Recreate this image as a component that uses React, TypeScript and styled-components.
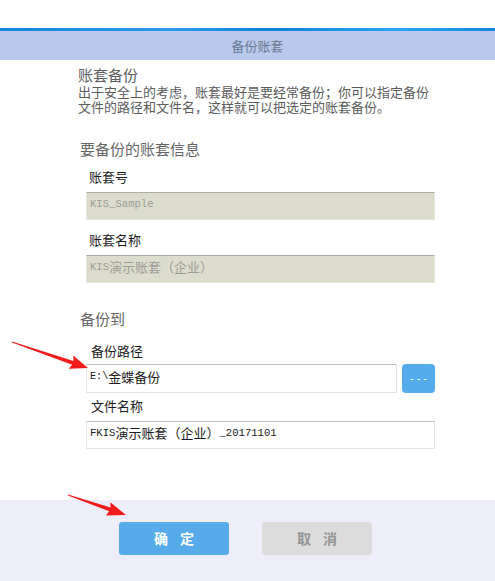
import React from 'react';
import styled, { createGlobalStyle } from 'styled-components';

const GlobalStyle = createGlobalStyle`
  html, body {
    margin: 0;
    padding: 0;
    background: #ffffff;
  }
  body {
    font-family: "Noto Sans CJK SC", "Noto Sans", sans-serif;
  }
`;

const Page = styled.div`
  position: relative;
  width: 495px;
  height: 581px;
  display: flex;
  flex-direction: column;
  background: #ffffff;
  overflow: hidden;
`;

const TopGap = styled.div`
  height: 28px;
  flex-shrink: 0;
`;

const TitleBar = styled.div`
  height: 32px;
  flex-shrink: 0;
  border-top: 3px solid transparent;
  border-image: linear-gradient(90deg, #1585da, #2a9ae8 35%, #1080d8 55%, #2ea2ee 80%, #1586dc) 1;
  background: #b9c9ec;
  display: flex;
  align-items: center;
  justify-content: center;
  padding-left: 20px;
  padding-bottom: 1px;
  box-sizing: border-box;
  font-size: 13px;
  color: #6b7a93;
`;

const Content = styled.div`
  flex: 1;
  padding: 6px 0 0 78px;
`;

const IntroTitle = styled.div`
  font-size: 15px;
  line-height: 18px;
  color: #606060;
`;

const IntroText = styled.div`
  width: 356px;
  font-size: 13px;
  line-height: 15px;
  color: #5c5c5c;
`;

const SectionTitle = styled.div<{ $gap: number }>`
  margin-top: ${(p) => p.$gap}px;
  padding-left: 2px;
  font-size: 15px;
  line-height: 18px;
  color: #666666;
`;

const Label = styled.div<{ $gap: number; $indent: number }>`
  margin-top: ${(p) => p.$gap}px;
  padding-left: ${(p) => p.$indent}px;
  font-size: 13px;
  line-height: 16px;
  color: #1c1c1c;
`;

const Field = styled.div<{ $disabled?: boolean; $width?: number; $height?: number }>`
  margin-top: ${(p) => (p.$disabled ? 7 : 0)}px;
  margin-left: 8px;
  width: ${(p) => p.$width ?? 349}px;
  height: ${(p) => p.$height ?? 28}px;
  box-sizing: border-box;
  display: flex;
  align-items: center;
  padding: 0 3px 5px;
  font-size: 13px;
  white-space: nowrap;
  background: ${(p) => (p.$disabled ? '#dcdccc' : '#ffffff')};
  color: ${(p) => (p.$disabled ? '#9c9c96' : '#1a1a1a')};
  border: 1px solid ${(p) => (p.$disabled ? '#e6e6de' : '#e2e4ea')};
  border-top-color: ${(p) => (p.$disabled ? '#acaca4' : '#b9bcc4')};
`;

const Mono = styled.span<{ $size?: number }>`
  font-family: "Liberation Mono", "DejaVu Sans Mono", monospace;
  font-size: ${(p) => p.$size ?? 10.6}px;
`;

const PathRow = styled.div`
  margin-top: 5px;
  display: flex;
  gap: 5px;
`;

const BrowseButton = styled.button`
  width: 33px;
  height: 29px;
  padding: 0 0 2px 3px;
  border: none;
  border-radius: 4px;
  background: #56abec;
  color: #ffffff;
  font-family: "Liberation Sans", sans-serif;
  font-size: 11px;
  letter-spacing: 3px;
  cursor: pointer;
`;

const FileField = styled(Field)`
  margin-top: 7px;
  border-top-color: #b8c2c0;
`;

const Footer = styled.div`
  height: 81px;
  flex-shrink: 0;
  background: #eeeefb;
  display: flex;
  align-items: flex-start;
  gap: 33px;
  padding: 22px 0 0 119px;
  box-sizing: border-box;
`;

const DialogButton = styled.button<{ $primary?: boolean }>`
  width: 110px;
  height: 33px;
  border: none;
  border-radius: 3px;
  background: ${(p) => (p.$primary ? '#58abeb' : '#dcdcdc')};
  color: ${(p) => (p.$primary ? '#ffffff' : '#949494')};
  font-family: "Noto Sans CJK SC", sans-serif;
  font-size: 14px;
  font-weight: 700;
  letter-spacing: 12px;
  text-indent: 12px;
  padding: 0 0 2px;
  cursor: pointer;
`;

const Overlay = styled.svg`
  position: absolute;
  left: 0;
  top: 0;
  pointer-events: none;
`;

function arrowPoints(x1: number, y1: number, x2: number, y2: number, head = 16, wing = 7, shaft = 2) {
  const dx = x2 - x1;
  const dy = y2 - y1;
  const len = Math.hypot(dx, dy);
  const ux = dx / len;
  const uy = dy / len;
  const nx = -uy;
  const ny = ux;
  const bx = x2 - ux * head;
  const by = y2 - uy * head;
  const pts = [
    [x1 + nx * 0.4, y1 + ny * 0.4],
    [bx + nx * shaft, by + ny * shaft],
    [bx - ux * 2 + nx * wing, by - uy * 2 + ny * wing],
    [x2, y2],
    [bx - ux * 2 - nx * wing, by - uy * 2 - ny * wing],
    [bx - nx * shaft, by - ny * shaft],
    [x1 - nx * 0.4, y1 - ny * 0.4],
  ];
  return pts.map(([x, y]) => `${x.toFixed(1)},${y.toFixed(1)}`).join(' ');
}

const App: React.FC = () => {
  return (
    <Page>
      <GlobalStyle />
      <TopGap />
      <TitleBar>备份账套</TitleBar>
      <Content>
        <IntroTitle>账套备份</IntroTitle>
        <IntroText>
          出于安全上的考虑，账套最好是要经常备份；你可以指定备份文件的路径和文件名，这样就可以把选定的账套备份。
        </IntroText>

        <SectionTitle $gap={26}>要备份的账套信息</SectionTitle>
        <Label $gap={11} $indent={11}>账套号</Label>
        <Field $disabled>
          <Mono>KIS_Sample</Mono>
        </Field>
        <Label $gap={12} $indent={11}>账套名称</Label>
        <Field $disabled>
          <Mono>KIS</Mono>演示账套（企业）
        </Field>

        <SectionTitle $gap={27}>备份到</SectionTitle>
        <Label $gap={15} $indent={13}>备份路径</Label>
        <PathRow>
          <Field $width={311} $height={29}>
            <Mono $size={10.2}>E:\</Mono>金蝶备份
          </Field>
          <BrowseButton>---</BrowseButton>
        </PathRow>
        <Label $gap={5} $indent={13}>文件名称</Label>
        <FileField>
          <Mono $size={10.6}>FKIS</Mono>演示账套（企业）<Mono $size={10.6}>_20171101</Mono>
        </FileField>
      </Content>
      <Footer>
        <DialogButton $primary>确定</DialogButton>
        <DialogButton>取消</DialogButton>
      </Footer>
      <Overlay width={495} height={581} viewBox="0 0 495 581">
        <polygon points={arrowPoints(12, 342, 88, 368)} fill="#f21c1c" />
        <polygon points={arrowPoints(68, 495, 126, 515, 17, 7)} fill="#f21c1c" />
      </Overlay>
    </Page>
  );
};

export default App;
